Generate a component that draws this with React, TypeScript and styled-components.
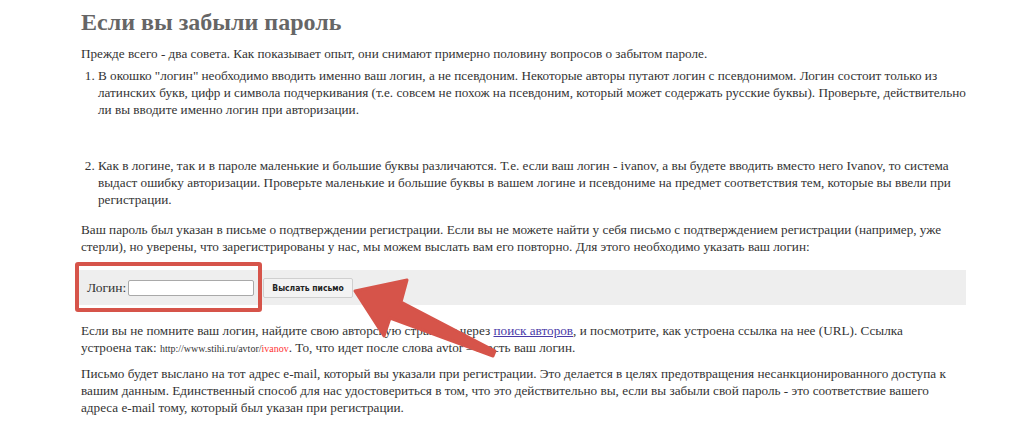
import React from "react";
import styled, { createGlobalStyle } from "styled-components";

const GlobalStyle = createGlobalStyle`
  html, body {
    margin: 0;
    padding: 0;
    background: #fff;
  }
  body {
    font-family: "Liberation Serif", "Times New Roman", serif;
    color: #333;
  }
`;

const Page = styled.div`
  position: relative;
  width: 1024px;
  height: 422px;
  overflow: hidden;
`;

const Content = styled.div`
  margin-left: 76px;
  width: 890px;
  padding-top: 8px;
  font-size: 13.2px;
  line-height: 17px;
`;

const Title = styled.h1`
  margin: 0 0 9px;
  padding: 0 5px;
  font-size: 24px;
  line-height: 28px;
  font-weight: bold;
  color: #666;
`;

const Para = styled.p<{ $top?: number }>`
  margin: ${(p) => p.$top ?? 0}px 0 0;
  padding: 0 4px 0 5px;
`;

const List = styled.ol`
  margin: 5px 0 0;
  padding: 0 0 0 22px;
`;

const Item = styled.li<{ $gap?: number }>`
  margin-bottom: ${(p) => p.$gap ?? 0}px;
`;

const FormBar = styled.div`
  position: relative;
  margin-top: 15px;
  height: 35px;
  background: #eeeeee;
  display: flex;
  align-items: center;
  padding-left: 11px;
`;

const Label = styled.label`
  font-size: 13.5px;
  color: #333;
  margin-right: 3px;
`;

const Input = styled.input`
  box-sizing: border-box;
  width: 126px;
  height: 16px;
  border: 1px solid #a9a9a9;
  border-radius: 2px;
  background: #fff;
  padding: 0 2px;
  margin: 0 9px 0 -1px;
`;

const SendButton = styled.button`
  box-sizing: border-box;
  height: 20px;
  padding: 0 8px;
  font-family: "DejaVu Sans Condensed", "DejaVu Sans", Verdana, sans-serif;
  font-weight: bold;
  font-size: 8.5px;
  color: #222;
  background: #f3f3f3;
  border: 1px solid #cfcfcf;
  border-radius: 2px;
`;

const Highlight = styled.div`
  position: absolute;
  left: -1px;
  top: -8px;
  width: 187px;
  height: 50px;
  box-sizing: border-box;
  border: 4px solid #d6544a;
  border-radius: 3px;
  pointer-events: none;
`;

const Link = styled.a`
  color: #4a3aa8;
  text-decoration: underline;
`;

const Url = styled.span`
  font-size: 10px;
  color: #333;
`;

const UrlTail = styled.span`
  color: #f33;
`;

const Arrow = styled.svg`
  position: absolute;
  left: 0;
  top: 0;
  pointer-events: none;
`;

export default function App() {
  return (
    <Page>
      <GlobalStyle />
      <Content>
        <Title>Если вы забыли пароль</Title>
        <Para>
          Прежде всего - два совета. Как показывает опыт, они снимают примерно
          половину вопросов о забытом пароле.
        </Para>
        <List>
          <Item $gap={39}>
            В окошко "логин" необходимо вводить именно ваш логин, а не
            псевдоним. Некоторые авторы путают логин с псевдонимом. Логин
            состоит только из латинских букв, цифр и символа подчеркивания
            (т.е. совсем не похож на псевдоним, который может содержать русские
            буквы). Проверьте, действительно ли вы вводите именно логин при
            авторизации.
          </Item>
          <Item>
            Как в логине, так и в пароле маленькие и большие буквы различаются.
            Т.е. если ваш логин - ivanov, а вы будете вводить вместо него
            Ivanov, то система выдаст ошибку авторизации. Проверьте маленькие и
            большие буквы в вашем логине и псевдониме на предмет соответствия
            тем, которые вы ввели при регистрации.
          </Item>
        </List>
        <Para $top={13}>
          Ваш пароль был указан в письме о подтверждении регистрации. Если вы
          не можете найти у себя письмо с подтверждением регистрации (например,
          уже стерли), но уверены, что зарегистрированы у нас, мы можем выслать
          вам его повторно. Для этого необходимо указать ваш логин:
        </Para>
        <FormBar>
          <Label>Логин:</Label>
          <Input type="text" />
          <SendButton>Выслать письмо</SendButton>
          <Highlight />
        </FormBar>
        <Para $top={17}>
          Если вы не помните ваш логин, найдите свою авторскую страницу через{" "}
          <Link href="#">поиск авторов</Link>, и посмотрите, как устроена
          ссылка на нее (URL). Ссылка
          <br />
          устроена так:{" "}
          <Url>
            http://www.stihi.ru/avtor/<UrlTail>ivanov</UrlTail>
          </Url>
          . То, что идет после слова avtor – и есть ваш логин.
        </Para>
        <Para $top={8}>
          Письмо будет выслано на тот адрес e-mail, который вы указали при
          регистрации. Это делается в целях предотвращения несанкционированного
          доступа к вашим данным. Единственный способ для нас удостовериться в
          том, что это действительно вы, если вы забыли свой пароль - это
          соответствие вашего адреса e-mail тому, который был указан при
          регистрации.
        </Para>
      </Content>
      <Arrow width="1024" height="422" viewBox="0 0 1024 422">
        <polygon
          points="355,291 407,280 401,302 495,351 493,356 390,318 384,336"
          fill="#d6544a"
          stroke="#d6544a"
          strokeWidth="3"
          strokeLinejoin="round"
        />
      </Arrow>
    </Page>
  );
}
